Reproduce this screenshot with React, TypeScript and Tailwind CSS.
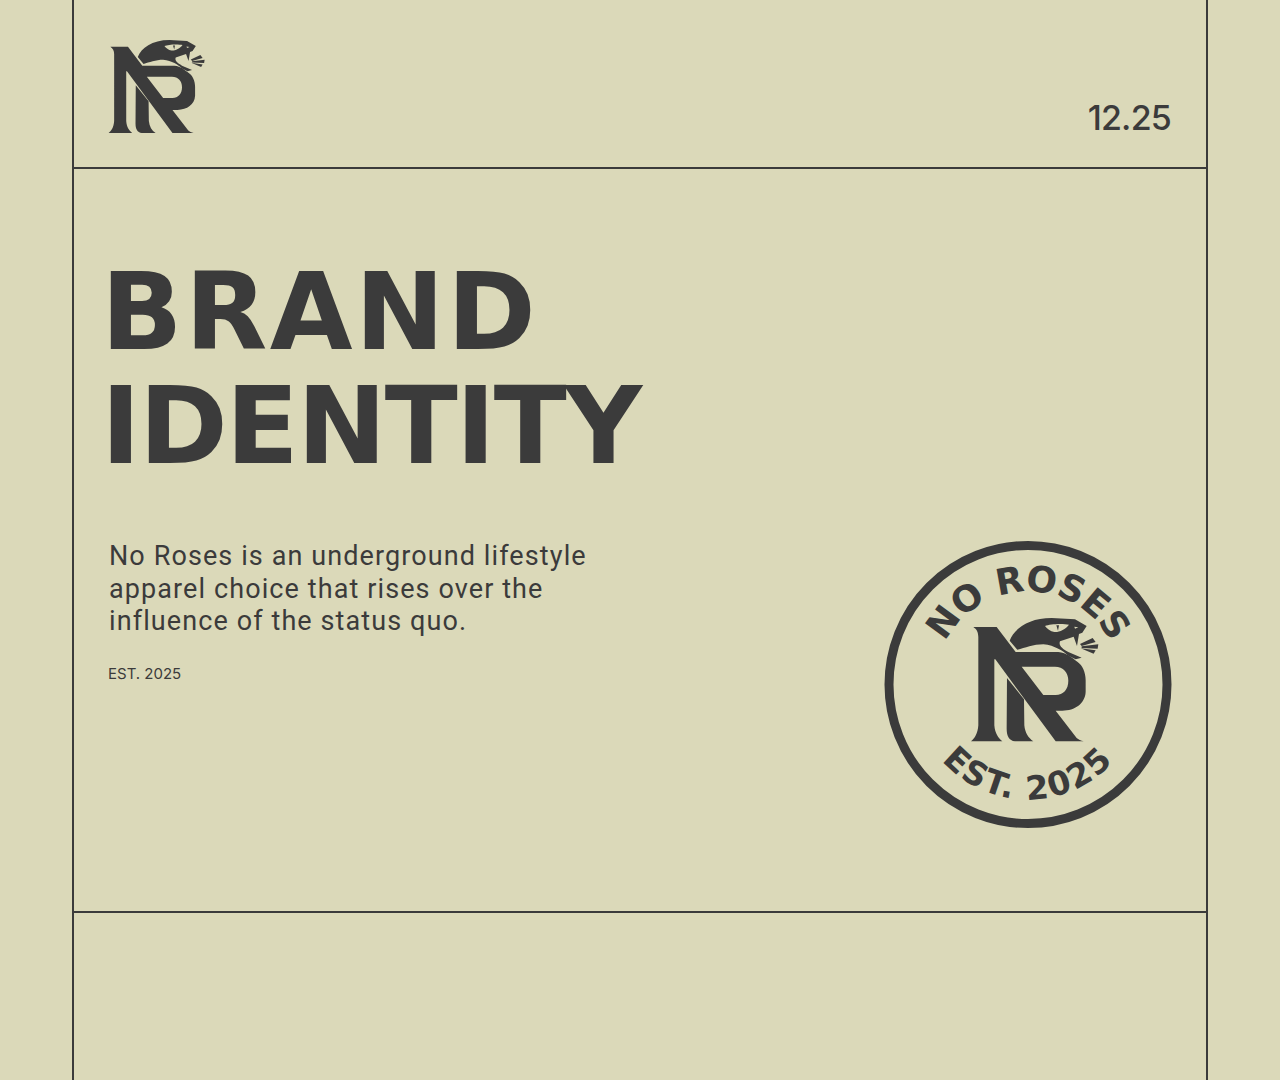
function LogoShapes() {
  return (
    <>
      {/* N stem and diagonal into the R leg */}
      <path d="M25,45 L95,45 L152,120 L280,120 C305,122 322,138 338,150 C352,160 362,180 362,205 L362,240 C360,275 330,296 292,296 L272,296 L335,378 C340,383 348,385 356,388 L272,388 L91,142 L88,142 L88,340 C90,365 100,378 112,388 L18,388 C30,378 38,365 40,340 L40,75 C40,60 35,52 25,45 Z M170,164 L235,249 L272,249 C295,249 310,232 310,206 C310,182 295,164 270,164 Z" fillRule="evenodd" />
      {/* right stem of the N */}
      <path d="M126,198 L177,262 L178,340 C180,362 190,378 205,388 L150,388 C132,385 125,372 125,350 Z" />
      {/* snake */}
      <path d="M134,86 C148,50 190,18 260,18 L330,22 L365,42 L352,62 L342,66 L336,102 L326,74 L285,88 C280,100 292,110 310,120 L350,137 L332,142 L310,131 C295,118 270,100 235,97 C205,97 180,108 157,113 Z" />
      <path d="M240,42 C255,35 295,34 312,38 C302,52 280,62 268,60 C256,58 246,50 240,42 Z" fill="#dbd9b9" />
      <path d="M274,40 L282,40 L279,56 Z" />
      <path d="M328,44 L340,46 L330,50 Z" fill="#dbd9b9" />
      {/* tongue */}
      <path d="M345,96 L383,78 L392,90 L350,102 Z" />
      <path d="M350,103 L400,97 L398,110 L350,108 Z" />
      <path d="M347,109 L392,115 L386,125 Z" />
    </>
  );
}

function Badge() {
  return (
    <svg width="288" height="290" viewBox="0 0 288 290" className="fill-[#3b3b3b]">
      <defs>
        <path id="arc-top" d="M144,144.5 m-93,0 a93,93 0 0 1 186,0" />
        <path id="arc-bottom" d="M144,144.5 m-115,0 a115,115 0 0 0 230,0" />
      </defs>
      <circle cx="144" cy="144.5" r="139" fill="none" stroke="#3b3b3b" strokeWidth="9" />
      <text className="font-['DejaVu_Sans'] font-bold text-[36px]">
        <textPath href="#arc-top" startOffset="50%" textAnchor="middle" letterSpacing="-0.5">
          NO ROSES
        </textPath>
      </text>
      <text className="font-['DejaVu_Sans'] font-bold text-[33px]">
        <textPath href="#arc-bottom" startOffset="50%" textAnchor="middle" letterSpacing="1.7">
          EST. 2025
        </textPath>
      </text>
      <g transform="translate(81 72) scale(0.3333)">
        <LogoShapes />
      </g>
    </svg>
  );
}

export default function App() {
  return (
    <div className="h-[1080px] overflow-hidden bg-[#dbd9b9] px-[72px] text-[#3b3b3b]">
      <div className="flex h-full flex-col border-x-2 border-[#3b3b3b]">
        <header className="flex h-[169px] shrink-0 items-start justify-between border-b-2 border-[#3b3b3b] pl-[34px] pr-[35px] pt-[40px]">
          <svg width="97" height="93" viewBox="17 18 383 370" className="fill-[#3b3b3b]">
            <LogoShapes />
          </svg>
          <span className="mt-[56px] font-['Inter'] text-[34px] font-medium leading-[44px] tracking-[-0.8px]">12.25</span>
        </header>

        <main className="flex h-[744px] shrink-0 justify-between border-b-2 border-[#3b3b3b] pl-[34px] pr-[34px]">
          <div className="pt-[86px]">
            <h1 className="ml-[-7px] font-['DejaVu_Sans'] text-[107px] font-bold leading-[114px]">
              <span className="tracking-[2.4px]">BRAND</span>
              <br />
              <span className="tracking-[-1.9px]">IDENTITY</span>
            </h1>
            <p className="ml-[1px] mt-[57px] w-[520px] font-['Roboto'] text-[27px] leading-[32.5px] tracking-[1.1px]">
              No Roses is an underground lifestyle
              <br />
              apparel choice that rises over the
              <br />
              influence of the status quo.
            </p>
            <p className="mt-[25px] font-['Inter'] text-[15px] leading-[22px]">EST. 2025</p>
          </div>
          <div className="pt-[371px]">
            <Badge />
          </div>
        </main>

        <div className="flex-1" />
      </div>
    </div>
  );
}
